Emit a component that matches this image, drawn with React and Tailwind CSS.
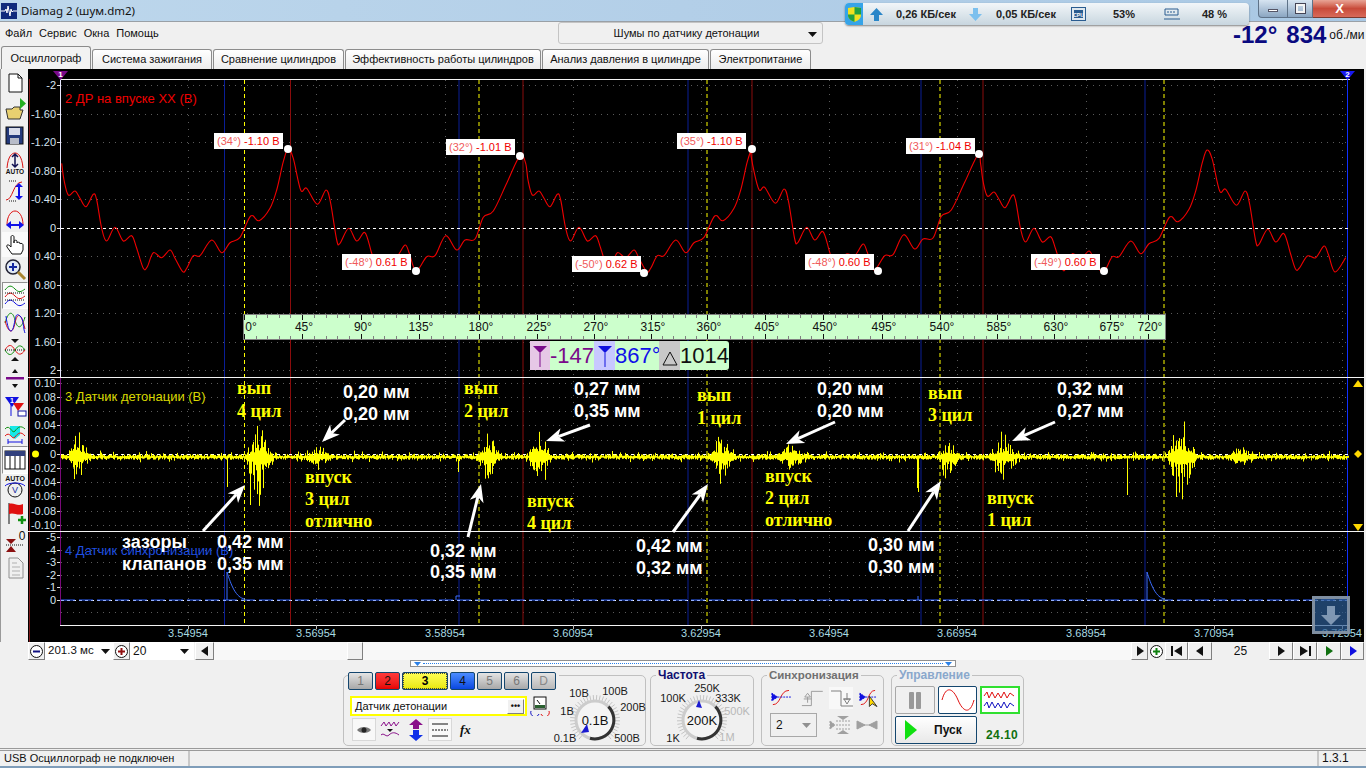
import React from "react";

const A = [[5,70],[12,120],[25,165],[45,153],[60,175],[78,200],[100,163],[110,180],[125,265],[140,303],[165,262],[190,303],[215,287],[230,325],[250,385],[262,380],[280,338],[305,353],[330,330],[345,355],[368,395],[380,385],[400,347],[420,347],[455,300],[485,338],[510,308],[540,292],[572,228],[597,242],[630,205],[650,150],[670,65],[684,27]];
const B = [[700,55],[722,150],[740,145],[772,193],[798,150],[812,190],[830,300],[840,310],[866,265],[890,303],[915,278],[935,340],[950,385],[962,380],[985,345],[1010,350],[1035,315],[1048,340],[1068,393],[1100,350],[1125,347],[1157,287],[1190,330],[1215,300],[1245,297],[1270,232],[1300,213],[1340,130],[1380,47]];
const conv = (arr, dx, dy = 0) => arr.map(([x, y]) => [60 + x / 3 + dx, 140 + y / 3 + dy]);
const redPts = [...conv(A, 0), ...conv(B, 0), ...conv(A, 464), ...conv(B, 458, -1), ...conv(A, 919, 1), ...conv(B, 919, 1)].filter((p) => p[0] <= 1349);
function smooth(p) {
  let d = `M${p[0][0].toFixed(1)} ${p[0][1].toFixed(1)}`;
  for (let i = 0; i < p.length - 1; i++) {
    const a = p[Math.max(0, i - 1)], b = p[i], c = p[i + 1], e = p[Math.min(p.length - 1, i + 2)];
    const c1x = b[0] + (c[0] - a[0]) / 6, c1y = b[1] + (c[1] - a[1]) / 6;
    const c2x = c[0] - (e[0] - b[0]) / 6, c2y = c[1] - (e[1] - b[1]) / 6;
    d += `C${c1x.toFixed(1)} ${c1y.toFixed(1)} ${c2x.toFixed(1)} ${c2y.toFixed(1)} ${c[0].toFixed(1)} ${c[1].toFixed(1)}`;
  }
  return d;
}
const redLine = smooth(redPts);

const bursts = [[75,68,92,36,24],[258,245,274,40,50],[318,305,332,12,12],[487,476,502,24,24],[538,528,552,36,36],[720,709,736,28,30],[790,775,812,12,10],[945,936,962,22,22],[1000,988,1022,28,26],[1180,1167,1197,50,46],[1240,1225,1258,12,10]];
const spikes = [[227,487],[250,505],[458,472],[918,492],[1127,495],[1176,497],[917,488]];
function yellowPath() {
  let s = 98765;
  const r = () => { s = (s * 1103515245 + 12345) & 0x7fffffff; return ((s >> 8) & 0xffff) / 0xffff; };
  let d = "";
  for (let x = 61; x < 1349; x++) {
    let up = 0.6 + r() * 2.2, dn = 0.6 + r() * 2.2;
    if (r() < 0.1) up += r() * 4;
    if (r() < 0.1) dn += r() * 3;
    for (const [c, a, b, u, v] of bursts) {
      if (x >= a && x <= b) {
        const t = x < c ? (x - a) / Math.max(1, c - a) : (b - x) / Math.max(1, b - c);
        const q = r(), w = r();
        up += u * t * (0.12 + 0.88 * q * q);
        dn += v * t * (0.12 + 0.88 * w * w);
      }
    }
    let bot = 457 + dn;
    for (const [sx, sy] of spikes) if (sx === x) bot = sy;
    d += `M${x + 0.5} ${(457 - up).toFixed(1)}V${bot.toFixed(1)}`;
  }
  return d;
}
const yPath = yellowPath();

const xTicks = [188, 316, 445, 573, 701, 829, 957, 1086, 1214, 1342];
const xLabels = ["3.54954","3.56954","3.58954","3.60954","3.62954","3.64954","3.66954","3.68954","3.70954","3.72954"];
const p1 = [["-2",85],["-1.60",114],["-1.20",142],["-0.80",171],["-0.40",199],["0",228],["0.40",256],["0.80",285],["1.20",313],["1.60",342],["2",370]];
const p2 = [["0.10",383],["0.08",397],["0.06",411],["0.04",425],["0.02",440],["0",454],["-0.02",468],["-0.04",482],["-0.06",496],["-0.08",511],["-0.10",525]];
const p3 = [["-5",537],["-4",550],["-3",562],["-2",575],["-1",587],["0",600],["1",612]];
const blue = [224.5, 459, 688, 921, 1145];
const yel = [244.5, 479, 707, 940, 1164];
const red = [290.5, 523, 752, 983];
const dots = [[288,149],[520,156],[752,149],[979,154],[416,271],[644,273],[878,271],[1104,271]];
const angT = [244,302,361,419,479,537,594,651,707,765,823,882,940,997,1054,1110,1148];
const angL = ["0°","45°","90°","135°","180°","225°","270°","315°","360°","405°","450°","495°","540°","585°","630°","675°","720°"];
const arrows = [[345,420,322,442],[590,425,546,441],[835,422,786,444],[1055,422,1012,441],[203,531,245,485],[468,537,481,484],[673,532,708,484],[908,531,941,481]];
const chips = [["(34°)","-1.10 В",214,133],["(32°)","-1.01 В",446,139],["(35°)","-1.10 В",677,133],["(31°)","-1.04 В",906,138],["(-48°)","0.61 В",342,254],["(-50°)","0.62 В",572,256],["(-48°)","0.60 В",805,254],["(-49°)","0.60 В",1031,254]];
const yNotes = [["вып",237,388],["4 цил",237,411],["вып",464,388],["2 цил",464,411],["вып",697,395],["1 цил",697,418],["вып",928,393],["3 цил",928,415],["впуск",305,477],["3 цил",305,499],["отлично",305,521],["впуск",527,501],["4 цил",527,523],["впуск",765,476],["2 цил",765,498],["отлично",765,520],["впуск",987,498],["1 цил",987,520]];
const wNotes = [["0,20 мм",343,392],["0,20 мм",343,414],["0,27 мм",574,389],["0,35 мм",574,411],["0,20 мм",817,389],["0,20 мм",817,411],["0,32 мм",1057,389],["0,27 мм",1057,411],["зазоры",122,542],["0,42 мм",217,542],["клапанов",122,564],["0,35 мм",217,564],["0,32 мм",430,551],["0,35 мм",430,572],["0,42 мм",636,546],["0,32 мм",636,568],["0,30 мм",868,545],["0,30 мм",868,567]];

function Arrow({ a }) {
  const [x1, y1, x2, y2] = a;
  const l = Math.hypot(x2 - x1, y2 - y1), ux = (x2 - x1) / l, uy = (y2 - y1) / l, nx = -uy, ny = ux;
  const hx = x2 - ux * 18, hy = y2 - uy * 18, mx = x2 - ux * 13, my = y2 - uy * 13;
  return (
    <g>
      <line x1={x1} y1={y1} x2={mx} y2={my} stroke="#fff" strokeWidth="3" />
      <polygon fill="#fff" points={`${x2},${y2} ${hx + nx * 7},${hy + ny * 7} ${mx},${my} ${hx - nx * 7},${hy - ny * 7}`} />
    </g>
  );
}

function Chart() {
  const hg = [...p1, ...p2, ...p3].map((v) => v[1]);
  return (
    <div className="relative w-[1336px] h-[573px] bg-black overflow-hidden">
      <svg width="1336" height="573" className="block">
        <g transform="translate(-28,-69)" fontSize="11">
          {hg.map((y, i) => <line key={i} x1="61" x2="1347" y1={y + 0.5} y2={y + 0.5} stroke="#5a5a5a" strokeDasharray="1 5" />)}
          {xTicks.map((x) => <line key={x} x1={x + 0.5} x2={x + 0.5} y1="80" y2="625" stroke="#5a5a5a" strokeDasharray="1 6" />)}
          {blue.map((x) => <line key={x} x1={x} x2={x} y1="80" y2="625" stroke="#0a1e96" />)}
          {red.map((x) => <line key={x} x1={x} x2={x} y1="80" y2="625" stroke="#8a0c0c" />)}
          {yel.map((x) => <line key={x} x1={x} x2={x} y1="80" y2="625" stroke="#ffff00" strokeDasharray="4 3" />)}
          <line x1="29.5" x2="29.5" y1="79" y2="642" stroke="#7d1a1a" />
          <line x1="60.5" x2="60.5" y1="79" y2="377" stroke="#e8e8ff" />
          <line x1="60.5" x2="60.5" y1="377" y2="625" stroke="#7a0a7a" />
          <line x1="1347.5" x2="1347.5" y1="79" y2="625" stroke="#1030ff" />
          <line x1="61" x2="1348" y1="228.5" y2="228.5" stroke="#fff" strokeDasharray="3 3" />
          <line x1="61" x2="1348" y1="454.5" y2="454.5" stroke="#fff" strokeDasharray="3 3" />
          <line x1="61" x2="1348" y1="600.5" y2="600.5" stroke="#fff" strokeDasharray="3 3" />
          <path d={redLine} fill="none" stroke="#f00000" strokeWidth="1.1" strokeLinejoin="round" />
          {dots.map(([x, y], i) => <circle key={i} cx={x} cy={y} r="4" fill="#fff" />)}
          <path d={yPath} stroke="#ffff00" strokeWidth="1" fill="none" />
          <line x1="61" x2="1347" y1="600" y2="600" stroke="#2f62ff" strokeWidth="1.2" strokeDasharray="14 4" />
          <path d="M227 600V572C231 585 236 598 245 599" stroke="#3a6cff" fill="none" />
          <path d="M1147 600V572C1151 585 1156 598 1165 599" stroke="#3a6cff" fill="none" />
          <path d="M456 600V596H460M918 600V596" stroke="#3a6cff" fill="none" />
          {[79.5, 377.5, 531.5, 625.5].map((y, i) => <line key={y} x1={i === 1 || i === 2 ? 28 : 60} x2={i === 1 || i === 2 ? 1364 : 1350} y1={y} y2={y} stroke="#f4f4f4" />)}
          {[...p1, ...p2, ...p3.slice(0, 6)].map(([t, y], i) => (
            <g key={i}>
              <line x1="57" x2="60" y1={y + 0.5} y2={y + 0.5} stroke="#ddd" />
              <text x="56" y={y + 4} textAnchor="end" fill="#d3e2ee">{t}</text>
            </g>
          ))}
          {xTicks.map((x, i) => (
            <g key={x}>
              <line x1={x + 0.5} x2={x + 0.5} y1="625" y2="629" stroke="#bbb" />
              <text x={x} y="637" textAnchor="middle" fill="#a9dbe2">{xLabels[i]}</text>
            </g>
          ))}
          {arrows.map((a, i) => <Arrow key={i} a={a} />)}
          <polygon points="53,71 68,71 60.5,80" fill="#7a0a8a" />
          <text x="60.5" y="77" textAnchor="middle" fontSize="8" fontWeight="700" fill="#fff">1</text>
          <polygon points="1340,71 1355,71 1347.5,80" fill="#1818f0" />
          <text x="1347.5" y="77" textAnchor="middle" fontSize="8" fontWeight="700" fill="#fff">2</text>
          <circle cx="35.5" cy="454" r="3.5" fill="#ffff00" />
          <polygon points="1353,387 1363,387 1358,380" fill="#ffd800" />
          <polygon points="1354,454 1358,450 1362,454 1358,458" fill="#ffd800" />
          <polygon points="1353,524 1363,524 1358,531" fill="#ffd800" />
          <rect x="243.5" y="314.5" width="922" height="25" fill="#ccffcc" stroke="#808080" />
          {angT.map((x, i) => (
            <g key={i}>
              <line x1={x + 0.5} x2={x + 0.5} y1="315" y2="320" stroke="#111" />
              <line x1={x + 0.5} x2={x + 0.5} y1="334" y2="339" stroke="#111" />
              {i < 16 && [1, 2, 3, 4].map((k) => {
                const m = Math.round(x + ((angT[i + 1] - x) * k) / 5) + 0.5;
                return <g key={k}><line x1={m} x2={m} y1="315" y2="318" stroke="#808080" /><line x1={m} x2={m} y1="336" y2="339" stroke="#808080" /></g>;
              })}
              <text x={i === 0 ? 251 : i === 16 ? 1150 : x + 2} y="331" textAnchor="middle" fontSize="12" fill="#111">{angL[i]}</text>
            </g>
          ))}
        </g>
      </svg>
      <div className="absolute left-[37px] top-[20px] text-[13px] text-[#f00000]">2 ДР на впуске ХХ (В)</div>
      <div className="absolute left-[37px] top-[318px] text-[13px] text-[#d8d800]">3 Датчик детонации (В)</div>
      <div className="absolute left-[37px] top-[472px] text-[13px] text-[#1f4fe0]">4 Датчик синхронизации (В)</div>
      {chips.map(([a, b, x, y], i) => (
        <div key={i} className="absolute h-[16px] px-[3px] bg-white text-[11px] leading-[16px] whitespace-nowrap text-[#f00000]" style={{ left: x - 28, top: y - 69 }}>
          <span className="text-[#f05a5a]">{a}</span> {b}
        </div>
      ))}
      {yNotes.map(([t, x, y], i) => (
        <div key={i} className="absolute -translate-y-1/2 [font-family:'Liberation_Serif',serif] font-bold text-[18px] leading-none whitespace-nowrap text-[#ffff00]" style={{ left: x - 28, top: y - 69 }}>{t}</div>
      ))}
      {wNotes.map(([t, x, y], i) => (
        <div key={i} className="absolute -translate-y-1/2 font-bold text-[18px] leading-none whitespace-nowrap text-white" style={{ left: x - 28, top: y - 69 }}>{t}</div>
      ))}
      <div className="absolute left-[502px] top-[272px] w-[199px] h-[29px] flex items-center rounded-r-[3px] bg-[#ccffcc] text-[22px] leading-none">
        <span className="w-[20px] h-full bg-[#e6c8e6] flex items-center justify-center">
          <svg width="16" height="22" viewBox="0 0 16 22"><path d="M1 1H15L8 8ZM7.5 8H8.5V22H7.5Z" fill="#7a0a8a" /></svg>
        </span>
        <span className="w-[44px] text-center text-[#7a0a8a]">-147</span>
        <span className="w-[21px] h-full bg-[#c8c8ff] flex items-center justify-center">
          <svg width="16" height="22" viewBox="0 0 16 22"><path d="M1 1H15L8 8ZM7.5 8H8.5V22H7.5Z" fill="#1010e0" /></svg>
        </span>
        <span className="w-[44px] text-center text-[#1010e8]">867°</span>
        <span className="w-[21px] h-full bg-[#c8c8c8] flex items-center justify-center">
          <svg width="16" height="20" viewBox="0 0 16 20"><path d="M8 6L15 19H1Z" fill="none" stroke="#111" /></svg>
        </span>
        <span className="w-[49px] text-center text-[#111]">1014</span>
      </div>
      <div className="absolute left-[1284px] top-[527px] w-[38px] h-[38px] border-[3px] border-[#8a97a6]/90 bg-[#2c5c96]/70 flex items-center justify-center">
        <svg width="24" height="24" viewBox="0 0 24 24"><path d="M8 3H16V12H22L12 22L2 12H8Z" fill="#7f97b3" /></svg>
      </div>
    </div>
  );
}

const S = ({ w = 24, h = 24, children }) => <svg width={w} height={h} viewBox={`0 0 ${w} ${h}`}>{children}</svg>;

const tools = [
  ["h-[27px]", 0, <S><path d="M6 3H15L19 7V21H6Z" fill="#fff" stroke="#111" /><path d="M15 3V7H19" fill="none" stroke="#111" /></S>],
  ["h-[27px]", 0, <S><path d="M5 21L3 11H9L11 9H17V12H20L17 21Z" fill="#e8d070" stroke="#333" /><path d="M17 0V11L23 5.5Z" fill="#22b022" /></S>],
  ["h-[26px]", 0, <S><rect x="3" y="3" width="17" height="17" fill="#243a7c" stroke="#111" /><rect x="6" y="4" width="11" height="7" fill="#d8dcea" /><rect x="7" y="14" width="9" height="6" fill="#b8bcc8" /></S>],
  ["h-[28px]", 0, <S><path d="M4 17C5 5 9 2 12 2C15 2 19 5 20 17" fill="none" stroke="#d81010" /><path d="M12 4V15M9 6L12 3L15 6M9 13L12 16L15 13" fill="none" stroke="#101050" strokeWidth="1.5" /><text x="12" y="23" textAnchor="middle" fontSize="6.5" fontWeight="700" fill="#111">AUTO</text></S>],
  ["h-[28px]", 0, <S><path d="M3 21C10 21 10 3 19 3" fill="none" stroke="#d81010" /><path d="M16 6V19" stroke="#1010e8" strokeWidth="2" /><path d="M12 8L16 4L20 8ZM12 17L16 21L20 17Z" fill="#1010e8" /><path d="M6 2H14M6 22H14" stroke="#111" strokeDasharray="1 1" /></S>],
  ["h-[27px]", 0, <S><path d="M4 18C4 9 8 4 12 4C16 4 20 9 20 18" fill="none" stroke="#e01010" /><path d="M7 18H17" stroke="#1010e8" strokeWidth="2" /><path d="M8 14L3 18L8 22ZM16 14L21 18L16 22Z" fill="#1010e8" /></S>],
  ["h-[25px]", 2, <S><path d="M9 21L4 14C3 12 5 11 7 13L8 14V4C8 2 11 2 11 4V10V8C11 7 14 7 14 8V10C14 9 17 9 17 10V11C17 10 20 10 20 12V17L18 21Z" fill="#fff" stroke="#111" /></S>],
  ["h-[25px]", 0, <S><circle cx="10" cy="9" r="7" fill="#dfe8f4" stroke="#223" strokeWidth="1.5" /><path d="M6 9H14M10 5V13" stroke="#1428a0" strokeWidth="2" /><path d="M15 14L22 21" stroke="#a88430" strokeWidth="3" /></S>],
  ["h-[27px]", 1, <S><path d="M2 6C6 1 8 1 12 5S18 8 22 5" fill="none" stroke="#109010" /><path d="M2 13C6 8 8 8 12 12S18 15 22 12" fill="none" stroke="#e01010" /><path d="M2 20C6 15 8 15 12 19S18 22 22 19" fill="none" stroke="#1010e0" /><path d="M2 9H22M2 16H22" stroke="#111" strokeDasharray="1 1" /></S>],
  ["h-[27px]", 0, <S><path d="M2 12C6 -2 10 1 12 9S18 20 22 6" fill="none" stroke="#109010" /><path d="M2 10C6 24 10 22 12 12S18 0 22 18" fill="none" stroke="#e01010" /><path d="M3 5C5 22 9 24 11 14S13 2 17 5S20 18 22 22" fill="none" stroke="#1010e0" /></S>],
  ["h-[28px]", 0, <S><path d="M8 1H16L12 5ZM8 23H16L12 19Z" fill="#111" /><path d="M2 12C6 5 9 7 12 12S18 18 22 12" fill="none" stroke="#e01010" /><path d="M2 12C6 19 9 17 12 12S18 6 22 12" fill="none" stroke="#109010" /><path d="M2 12H22" stroke="#111" strokeDasharray="1 1" /></S>],
  ["h-[28px]", 0, <S><path d="M9 7L12 3L15 7ZM9 18L15 18L12 22Z" fill="#111" /><rect x="3" y="11" width="18" height="2.5" fill="#7a0a8a" /></S>],
  ["h-[27px]", 0, <S><path d="M2 3H16L9 13Z" fill="#1010e0" /><path d="M8 3V22" stroke="#1010e0" /><path d="M10 9H21L15 17Z" fill="#e01010" /><rect x="15" y="17" width="8" height="5" fill="#fff" stroke="#1010a0" /><text x="7" y="9" fontSize="7" fill="#fff" fontWeight="700">1</text></S>],
  ["h-[27px]", 0, <S><path d="M7 5H17V14L12 18L7 14Z" fill="#18e8e8" /><path d="M2 8C7 2 9 14 12 10S18 4 22 8" fill="none" stroke="#109010" /><path d="M2 15C7 9 9 20 12 16S18 10 22 15" fill="none" stroke="#e01010" /><path d="M5 21H19M5 18V23M19 18V23" stroke="#1010e0" /></S>],
  ["h-[28px]", 1, <S><rect x="2" y="3" width="20" height="18" fill="#fff" stroke="#111" /><rect x="2" y="3" width="20" height="5" fill="#32407c" /><path d="M7 8V21M12 8V21M17 8V21" stroke="#111" /></S>],
  ["h-[26px]", 0, <S><text x="12" y="6" textAnchor="middle" fontSize="7" fontWeight="700" fill="#111">AUTO</text><circle cx="12" cy="15" r="7" fill="#eee" stroke="#111" /><text x="12" y="18" textAnchor="middle" fontSize="9" fill="#1428a0">V</text><path d="M2 11C5 7 19 7 22 11" fill="none" stroke="#1010e0" /></S>],
  ["h-[26px]", 0, <S><path d="M6 2V23" stroke="#111" /><path d="M6 3C11 1 14 6 20 3V13C14 15 11 11 6 13Z" fill="#e01010" /><path d="M15 19H23M19 15V23" stroke="#109010" strokeWidth="2.5" /></S>],
  ["h-[28px]", 0, <S><path d="M3 11H13L8 16ZM3 24H13L8 18Z" fill="#8a1010" /><path d="M3 17H20" stroke="#111" strokeDasharray="1 1" /><text x="19" y="12" textAnchor="middle" fontSize="12" fill="#111">0</text></S>],
  ["h-[28px]", 0, <S><path d="M6 2H15L20 7V22H6Z" fill="#f0f0f0" stroke="#909090" /><path d="M9 7H14M9 11H17M9 15H17M9 19H17" stroke="#b0b0b0" /></S>],
];

const raised = "border border-t-white border-l-white border-r-[#808080] border-b-[#808080] bg-[#f0f0f0] flex items-center justify-center";
const Tri = ({ dir = "r", c = "#111", s = 8 }) => <svg width={s} height={s + 2} viewBox="0 0 8 10"><path d={dir === "r" ? "M1 0L8 5L1 10Z" : "M7 0L0 5L7 10Z"} fill={c} /></svg>;
const Caret = () => <svg width="9" height="5" viewBox="0 0 9 5"><path d="M0 0H9L4.5 5Z" fill="#111" /></svg>;

function Knob({ cx, labels, text, active }) {
  const ticks = [];
  const cy = 45;
  for (let a = 130; a <= 410; a += 8) {
    const r = (a * Math.PI) / 180;
    ticks.push(<line key={a} x1={cx + 20 * Math.cos(r)} y1={cy + 20 * Math.sin(r)} x2={cx + 25 * Math.cos(r)} y2={cy + 25 * Math.sin(r)} stroke="#c4c4c4" />);
  }
  return (
    <svg width="106" height="70" viewBox="0 0 106 70" className="block" fontSize="11">
      {ticks}
      <circle cx={cx} cy={cy} r="19" fill="#f4f4f4" stroke="#cccccc" strokeWidth="3" />
      <path d={`M${cx + 13.4} ${cy - 13.4}A19 19 0 0 1 ${cx - 5} ${cy + 18.3}`} fill="none" stroke="#333" strokeWidth="3" />
      <path d={active} fill="#1a1ad0" />
      <text x={cx} y={cy + 5} textAnchor="middle" fontSize="13" fill="#111">{text}</text>
      {labels.map(([t, x, y, c], i) => <text key={i} x={x} y={y} textAnchor="middle" fill={c || "#1a1a1a"}>{t}</text>)}
    </svg>
  );
}

const chan = [
  ["1", "w-[25px] from-[#e4e4e4] to-[#a8a8a8] text-[#777]"],
  ["2", "w-[25px] from-[#ff3a3a] to-[#e60000] text-[#111]"],
  ["3", "w-[46px] from-[#ffff50] to-[#e8e800] text-black font-bold outline-1 -outline-offset-2 outline-dotted outline-[#444]"],
  ["4", "w-[25px] from-[#4c8cff] to-[#0a46e0] text-[#111]"],
  ["5", "w-[25px] from-[#e4e4e4] to-[#a8a8a8] text-[#777]"],
  ["6", "w-[25px] from-[#e4e4e4] to-[#a8a8a8] text-[#777]"],
  ["D", "w-[25px] from-[#e4e4e4] to-[#b8b8b8] text-[#888]"],
];

function Panel() {
  return (
    <div className="flex h-[88px] pl-[343px] pt-[15px]">
      <div className="relative w-[303px] h-[71px] border border-[#c0c0c0] rounded-[5px]">
        <div className="absolute left-[4px] -top-[4px] flex gap-[2px] bg-[#f0f0f0] pr-[3px]">
          {chan.map(([t, c]) => <div key={t} className={"h-[18px] rounded-[2px] border border-[#14466e] bg-linear-to-b flex items-center justify-center text-[12px] " + c}>{t}</div>)}
        </div>
        <div className="flex ml-[6px] mt-[20px] items-center gap-[3px]">
          <div className="w-[177px] h-[20px] border-2 border-[#ffff00] bg-white flex items-center justify-between pl-[3px] pr-[1px] text-[11px] text-[#111]">
            <span>Датчик детонации</span>
            <span className={raised + " w-[17px] h-[15px] text-[9px] font-bold leading-none"}>•••</span>
          </div>
          <S w={20} h={20}><rect x="4" y="1" width="12" height="12" fill="#fff" stroke="#111" /><rect x="5" y="9" width="10" height="3" fill="#2a6030" /><path d="M7 4L10 8" stroke="#111" /><path d="M1 15A4 4 0 0 0 9 18" fill="none" stroke="#1010c0" /><path d="M19 15A4 4 0 0 1 11 18" fill="none" stroke="#e01010" /></S>
        </div>
        <div className="flex ml-[8px] mt-[2px] items-center">
          <div className="w-[24px] h-[23px] border border-[#d8d8d8] bg-[#f8f8f8] flex items-center justify-center"><S w={16} h={10}><path d="M1 5C4 1 12 1 15 5C12 9 4 9 1 5Z" fill="#777" /><circle cx="8" cy="5" r="2.5" fill="#222" /></S></div>
          <div className="w-[28px] flex justify-center"><S w={20} h={20}><path d="M1 6L4 2L6 6L9 2L11 6L14 2L16 6L19 2" fill="none" stroke="#8a108a" /><path d="M7 9H13L10 12Z" fill="#111" /><path d="M1 15C4 12 6 18 9 15S15 12 19 15" fill="none" stroke="#8a108a" /></S></div>
          <div className="w-[24px] flex justify-center"><S w={20} h={22}><path d="M10 0L17 6H13V10H7V6H3Z" fill="#8a108a" /><path d="M10 22L17 16H13V11H7V16H3Z" fill="#1030e8" /></S></div>
          <div className="w-[24px] h-[23px] border border-[#d8d8d8] bg-[#f8f8f8] flex items-center justify-center"><S w={18} h={14}><path d="M1 1H17M1 13H17" stroke="#111" /><path d="M1 7H17" stroke="#111" strokeDasharray="2 1" /></S></div>
          <span className="ml-[8px] [font-family:'Liberation_Serif',serif] italic font-bold text-[13px] text-[#111]">fx</span>
        </div>
        <div className="absolute left-[201px] -top-[1px]">
          <Knob cx={50} text="0.1В" active="M36 58L42 49L44 57Z" labels={[["10В",34,22],["100В",70,20],["200В",88,36],["1В",22,40],["0.1В",20,67],["500В",82,67]]} />
        </div>
      </div>
      <div className="relative ml-[4px] w-[104px] h-[71px] border border-[#c0c0c0] rounded-[5px]">
        <span className="absolute left-[5px] -top-[8px] bg-[#f0f0f0] px-[2px] text-[12px] leading-[14px] font-bold text-[#101070]">Частота</span>
        <div className="absolute left-0 -top-[1px]">
          <Knob cx={51} text="200K" active="M45 32L48 25L51 33Z" labels={[["100K",22,27],["250K",56,17],["333K",77,27],["500K",86,40,"#b8b8b8"],["1M",76,66,"#b8b8b8"],["1K",22,67]]} />
        </div>
      </div>
      <div className="relative ml-[7px] w-[123px] h-[71px] border border-[#c0c0c0] rounded-[5px]">
        <span className="absolute left-[5px] -top-[8px] bg-[#f0f0f0] px-[2px] text-[11.5px] leading-[14px] font-bold text-[#707070]">Синхронизация</span>
        <div className="flex gap-[5px] ml-[8px] mt-[11px]">
          <S w={26} h={22}><path d="M3 18C12 18 10 3 20 3" fill="none" stroke="#e01010" /><path d="M2 6V14L8 10ZM8 10H22" fill="#1010e0" stroke="#1010e0" strokeDasharray="2 1" /></S>
          <S w={26} h={22}><path d="M2 19H12V4H24M4 12H12M8 6L11 10H5ZM8 10V16" fill="none" stroke="#9a9a9a" /></S>
          <div className="bg-[#f8f8f8]"><S w={24} h={22}><path d="M2 4H12V19H24M14 12H22M18 17L15 12H21ZM18 6V13" fill="none" stroke="#808080" /></S></div>
          <S w={26} h={22}><path d="M3 18C12 18 10 3 18 3" fill="none" stroke="#e01010" /><path d="M2 6V14L8 10ZM8 10H20" fill="#1010e0" stroke="#1010e0" strokeDasharray="2 1" /><path d="M12 9V20L15 17L20 20Z" fill="#ffd800" stroke="#333" /></S>
        </div>
        <div className="flex items-center ml-[8px] mt-[4px]">
          <div className="w-[47px] h-[24px] border border-[#a8a8a8] flex items-center justify-between px-[5px] text-[12px] text-[#111]">
            <span>2</span>
            <svg width="9" height="5" viewBox="0 0 9 5"><path d="M0 0H9L4.5 5Z" fill="#909090" /></svg>
          </div>
          <div className="ml-[12px]"><S w={24} h={20}><path d="M1 6V14L6 10ZM7 10H22M7 6H22M7 14H22" fill="#a0a0a0" stroke="#a0a0a0" strokeDasharray="2 1" /><path d="M8 1H20L14 5ZM8 19H20L14 15Z" fill="#a0a0a0" /></S></div>
          <div className="ml-[3px]"><S w={22} h={14}><path d="M1 3L9 7L1 11ZM21 3L13 7L21 11ZM1 7H21" fill="#a0a0a0" stroke="#a0a0a0" /></S></div>
        </div>
      </div>
      <div className="relative ml-[7px] w-[133px] h-[71px] border border-[#c0c0c0] rounded-[5px]">
        <span className="absolute left-[5px] -top-[8px] bg-[#f0f0f0] px-[2px] text-[12px] leading-[14px] font-bold text-[#8aa8cc]">Управление</span>
        <div className="flex gap-[3px] ml-[3px] mt-[10px]">
          <div className="w-[40px] h-[28px] border border-[#a8a8a8] rounded-[2px] flex items-center justify-center gap-[2px]"><div className="w-[5px] h-[17px] bg-[#999] rounded-[1px]" /><div className="w-[5px] h-[17px] bg-[#999] rounded-[1px]" /></div>
          <div className="w-[39px] h-[28px] border border-[#14466e] rounded-[2px] bg-white flex items-center justify-center"><S w={34} h={22}><path d="M1 11C5 -4 12 -1 17 11S29 26 33 11" fill="none" stroke="#e01010" /></S></div>
          <div className="w-[40px] h-[28px] border-2 border-[#30e030] bg-white flex items-center justify-center"><S w={34} h={22}><path d="M1 7L4 3L6 9L9 3L12 9L15 4L18 9L21 3L24 9L27 4L31 7" fill="none" stroke="#e01010" /><path d="M1 17L4 13L6 19L9 13L12 19L15 14L18 19L21 13L24 19L27 14L31 17" fill="none" stroke="#1010c0" /></S></div>
        </div>
        <div className="flex items-center ml-[3px] mt-[2px]">
          <div className="w-[82px] h-[28px] border border-[#14466e] rounded-[2px] bg-linear-to-b from-white to-[#e8e8e8] flex items-center pl-[9px] gap-[17px]">
            <svg width="12" height="20" viewBox="0 0 12 20"><path d="M0 0L12 10L0 20Z" fill="#10e010" /></svg>
            <span className="text-[12px] font-bold text-[#111]">Пуск</span>
          </div>
          <span className="ml-[9px] mt-[10px] text-[12px] leading-none font-bold tracking-[0.4px] text-[#107010]">24.10</span>
        </div>
      </div>
    </div>
  );
}

const tabs = [["Система зажигания", "w-[120px]"], ["Сравнение цилиндров", "w-[131px]"], ["Эффективность работы цилиндров", "w-[196px]"], ["Анализ давления в цилиндре", "w-[167px]"], ["Электропитание", "w-[101px]"]];

export default function App() {
  return (
    <div className="relative w-[1366px] h-[768px] overflow-hidden flex flex-col bg-[#f0f0f0] [font-family:'Liberation_Sans',sans-serif] text-[12px] text-[#111]">
      <div className="h-[21px] shrink-0 flex items-center bg-linear-to-r from-[#bdd7ec] via-[#b3cfe8] to-[#a9c8e4]">
        <svg width="16" height="16" viewBox="0 0 16 16" className="ml-[1px]"><rect width="16" height="16" fill="#102a7c" /><path d="M0 8H4L5 6L6 10L7 3L9 13L10 6L11 9L12 8H16" fill="none" stroke="#fff" /></svg>
        <span className="ml-[4px] mt-[1px] [font-family:'Noto_Sans',sans-serif] text-[11.5px]">Diamag 2 (шум.dm2)</span>
        <div className="ml-auto flex h-[18px] self-start">
          <div className="w-[30px] rounded-bl-[4px] border border-t-0 border-[#5e7288] bg-linear-to-b from-[#d7e4f1] to-[#8ba6c2] flex items-center justify-center"><div className="w-[10px] h-[3px] mt-[3px] bg-white border border-[#556]" /></div>
          <div className="w-[25px] border-b border-r border-[#5e7288] bg-linear-to-b from-[#d7e4f1] to-[#8ba6c2] flex items-center justify-center"><div className="w-[9px] h-[9px] border-2 border-[#f4f4f4] outline outline-[#445]" /></div>
          <div className="w-[53px] bg-linear-to-b from-[#e8a496] via-[#c84a3a] to-[#d86a5a] border-b border-[#7a3a30] flex items-center justify-center text-white font-bold text-[13px] leading-none">X</div>
        </div>
      </div>
      <div className="h-px shrink-0 bg-[#9aa0a6]" />
      <div className="relative h-[24px] shrink-0 flex items-center">
        <div className="flex pl-[5px] gap-[7px] text-[11px] mt-[-2px]">
          <span>Файл</span><span>Сервис</span><span>Окна</span><span>Помощь</span>
        </div>
        <div className="absolute left-[558px] top-0 w-[265px] h-[22px] border border-[#c4c4c4] rounded-[3px] flex items-center justify-center pr-[8px]">
          <span className="text-[11px]">Шумы по датчику детонации</span>
          <span className="absolute right-[5px] top-[9px]"><Caret /></span>
        </div>
        <div className="absolute left-[1233px] top-[1px] flex items-center whitespace-nowrap text-[#0a0a80] font-bold text-[24px] leading-[24px]">
          <span>-12°</span>
          <span className="ml-[9px]">834</span>
          <span className="ml-[3px] font-normal text-[12px] text-[#111]">об./ми</span>
        </div>
      </div>
      <div className="h-[23px] shrink-0 flex items-end pl-[1px] gap-[1px] text-[11px]">
        <div className="w-[90px] h-[23px] rounded-t-[3px] border border-b-0 border-[#8c8c8c] bg-[#f2f2f2] flex items-center justify-center">Осциллограф</div>
        {tabs.map(([t, w]) => <div key={t} className={"h-[20px] rounded-t-[3px] border border-b-0 border-[#8c8c8c] bg-linear-to-b from-white to-[#ececec] flex items-center justify-center whitespace-nowrap " + w}>{t}</div>)}
      </div>
      <div className="flex shrink-0">
        <div className="w-[28px] border-l border-[#9a9a9a] flex flex-col items-center">
          {tools.map(([h, sel, ic], i) => (
            <div key={i} className={"w-[26px] flex items-center justify-center " + h + (sel === 1 ? " bg-[#fafafa] border border-t-[#909090] border-l-[#909090] border-r-white border-b-white" : sel === 2 ? " bg-[#fafafa]" : "")}>{ic}</div>
          ))}
        </div>
        <Chart />
      </div>
      <div className="h-[18px] shrink-0 flex ml-[28px] w-[1336px] text-[11px]">
        <div className={raised + " w-[17px]"}><svg width="13" height="13" viewBox="0 0 13 13"><circle cx="6.5" cy="6.5" r="6" fill="#fff" stroke="#111" /><path d="M3 6.5H10" stroke="#101080" strokeWidth="2" /></svg></div>
        <div className="w-[68px] bg-white flex items-center justify-between pl-[3px] pr-[3px] text-[11.5px]"><span>201.3 мс</span><Caret /></div>
        <div className={raised + " w-[17px]"}><svg width="13" height="13" viewBox="0 0 13 13"><circle cx="6.5" cy="6.5" r="6" fill="#fff" stroke="#111" /><path d="M3 6.5H10M6.5 3V10" stroke="#901010" strokeWidth="2" /></svg></div>
        <div className="w-[64px] bg-white flex items-center justify-between pl-[3px] pr-[5px] text-[12px]"><span>20</span><Caret /></div>
        <div className={raised + " w-[19px] ml-[1px]"}><Tri dir="l" /></div>
        <div className="flex-1 bg-[#f8f8f8] pl-[133px]"><div className={raised + " w-[16px] h-full"} /></div>
        <div className={raised + " w-[17px]"}><Tri /></div>
        <div className="w-[17px] flex items-center justify-center"><svg width="13" height="13" viewBox="0 0 13 13"><circle cx="6.5" cy="6.5" r="6" fill="#fff" stroke="#111" /><path d="M3 6.5H10M6.5 3V10" stroke="#108010" strokeWidth="2" /></svg></div>
        <div className={raised + " w-[23px]"}><svg width="11" height="10" viewBox="0 0 11 10"><path d="M0 0H2V10H0ZM11 0L3 5L11 10Z" fill="#111" /></svg></div>
        <div className={raised + " w-[24px]"}><Tri dir="l" /></div>
        <div className="w-[57px] flex items-center justify-center text-[12px]">25</div>
        <div className={raised + " w-[24px]"}><Tri /></div>
        <div className={raised + " w-[24px]"}><svg width="11" height="10" viewBox="0 0 11 10"><path d="M11 0H9V10H11ZM0 0L8 5L0 10Z" fill="#111" /></svg></div>
        <div className={raised + " w-[24px]"}><Tri c="#107010" /></div>
        <div className={raised + " w-[23px]"}><Tri c="#1010e0" /></div>
      </div>
      <div className="relative shrink-0">
        <div className="absolute left-[410px] top-0 w-[546px] h-[7px] border border-[#909090] bg-white flex items-center justify-between px-[3px]">
          <svg width="7" height="4" viewBox="0 0 7 4"><path d="M0 0H7L3.5 4Z" fill="#2a80e8" /></svg>
          <div className="flex-1 mx-[2px] border-t border-dotted border-[#2a80e8]" />
          <svg width="7" height="4" viewBox="0 0 7 4"><path d="M0 0H7L3.5 4Z" fill="#2a80e8" /></svg>
        </div>
        <Panel />
      </div>
      <div className="h-[3px] shrink-0 border-t border-b border-[#9a9a9a]" />
      <div className="h-[15px] shrink-0 flex text-[11px] leading-[15px]">
        <div className="w-[190px] pl-[4px] border-r-2 border-[#c8c8c8] whitespace-nowrap">USB Осциллограф не подключен</div>
        <div className="flex-1 border-r-2 border-[#c8c8c8]" />
        <div className="w-[47px] pl-[3px] text-[12px]">1.3.1</div>
      </div>
      <div className="flex-1 bg-[#7f9db9]" />

      <div className="absolute left-[845px] top-[3px] w-[404px] h-[22px] rounded-[4px] bg-linear-to-b from-[#f2f6f9] to-[#c8d6df] shadow-[0_1px_2px_rgba(0,0,0,0.45)] flex items-center text-[11px] font-bold text-[#222] whitespace-nowrap">
        <div className="w-[18px] h-full rounded-l-[4px] bg-[#36a4e8] flex items-center justify-center"><svg width="13" height="15" viewBox="0 0 13 15"><path d="M0 1L6.5 0L13 1V8C13 12 9 14 6.5 15C4 14 0 12 0 8Z" fill="#f0e020" /><path d="M6.5 0L13 1V7.5H6.5V15C4 14 0 12 0 8V7.5H6.5Z" fill="#20a040" /></svg></div>
        <svg width="13" height="13" viewBox="0 0 13 13" className="ml-[7px]"><path d="M6.5 0L13 7H9V13H4V7H0Z" fill="#2a86c8" /></svg>
        <span className="ml-[13px] w-[60px]">0,26 КБ/сек</span>
        <svg width="13" height="13" viewBox="0 0 13 13" className="ml-[13px]"><path d="M6.5 13L13 6H9V0H4V6H0Z" fill="#7cc0ee" /></svg>
        <span className="ml-[14px] w-[60px]">0,05 КБ/сек</span>
        <svg width="15" height="14" viewBox="0 0 15 14" className="ml-[15px]"><rect x="0.5" y="0.5" width="14" height="13" fill="#dfe8ef" stroke="#2a5c90" /><rect x="3" y="3" width="9" height="8" fill="#2a5c90" /><text x="7.5" y="9.5" textAnchor="middle" fontSize="5" fill="#fff">CPU</text></svg>
        <span className="ml-[27px] w-[24px]">53%</span>
        <svg width="16" height="12" viewBox="0 0 16 12" className="ml-[27px]"><path d="M1 1H14V7H1ZM0 11H16M4 3V5M7 3V5M10 3V5" fill="none" stroke="#2a5c90" /></svg>
        <span className="ml-[22px]">48 %</span>
      </div>
    </div>
  );
}
